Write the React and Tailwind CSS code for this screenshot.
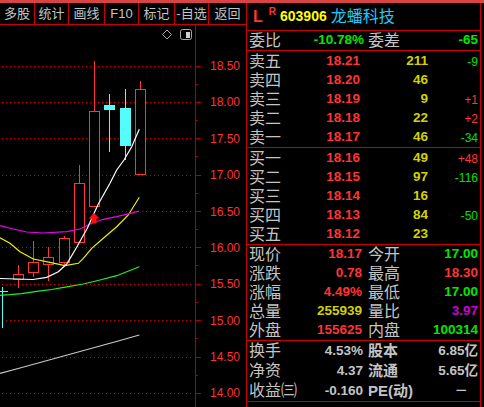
import React from "react";

const RED = "#ff3434";
const GREEN = "#00e800";
const YEL = "#d2d200";

const tools = [
  { t: "多股", w: "w-[35px]" },
  { t: "统计", w: "w-[34px]" },
  { t: "画线", w: "w-[36px]" },
  { t: "F10", w: "w-[34px]" },
  { t: "标记", w: "w-[36px]" },
  { t: "-自选", w: "w-[34px]" },
  { t: "返回", w: "flex-1", last: true },
];

// 盘口
const sells = [
  ["卖五", "18.21", "211", "-9"],
  ["卖四", "18.20", "46", ""],
  ["卖三", "18.19", "9", "+1"],
  ["卖二", "18.18", "22", "+2"],
  ["卖一", "18.17", "46", "-34"],
];
const buys = [
  ["买一", "18.16", "49", "+48"],
  ["买二", "18.15", "97", "-116"],
  ["买三", "18.14", "16", ""],
  ["买四", "18.13", "84", "-50"],
  ["买五", "18.12", "23", ""],
];

const stats = [
  ["现价", "18.17", RED, "今开", "17.00", GREEN],
  ["涨跌", "0.78", RED, "最高", "18.30", RED],
  ["涨幅", "4.49%", RED, "最低", "17.00", GREEN],
  ["总量", "255939", YEL, "量比", "3.97", "#d000d0"],
  ["外盘", "155625", RED, "内盘", "100314", GREEN],
];

const extra = [
  ["换手", "4.53%", "股本", "6.85亿"],
  ["净资", "4.37", "流通", "5.65亿"],
  ["收益㈢", "-0.160", "PE(动)", "－"],
];

// K线
const candles = [
  { x: 18.5, bt: 274.5, bb: 279.5, wt: 265, wb: 288, up: true },
  { x: 33.5, bt: 262.5, bb: 272.5, wt: 241, wb: 277, up: true },
  { x: 48.5, bt: 257.5, bb: 264.5, wt: 247, wb: 281, up: true },
  { x: 64.5, bt: 238.5, bb: 262.5, wt: 236, wb: 266, up: true },
  { x: 79.5, bt: 183.5, bb: 242.5, wt: 165, wb: 242, up: true },
  { x: 94.5, bt: 111.5, bb: 206.5, wt: 61, wb: 206, up: true },
  { x: 109.5, bt: 105, bb: 110, wt: 94, wb: 152, up: false },
  { x: 125.5, bt: 108, bb: 146, wt: 89, wb: 160, up: false },
  { x: 140.5, bt: 89.5, bb: 174.5, wt: 81, wb: 174, up: true },
];

const levels = ["18.50", "18.00", "17.50", "17.00", "16.50", "16.00", "15.50", "15.00", "14.50", "14.00"];
const yOf = (i) => 65.5 + i * 36.375;

const maWhite = "0,278.5 33,279.5 46.7,277.3 58.3,271.7 66.7,264 76.7,247.3 87.3,228.3 98.3,204 110,183.3 116.7,170 124,160 131.7,146.7 139.3,129.3";
const maPink = "0,225.7 13.3,229 26.7,232 43.3,233 66.7,231.7 80,229 91.7,223.3 103.3,219.3 116.7,216.7 130,213.3 139.3,211";
const maYellow = "0,237.7 10,243.3 20,251.7 33.3,259 50,262.3 65,265.7 78.3,263.3 83.3,258.3 91.7,248.3 103.3,238.3 116.7,226.7 128.3,215 139.3,197.3";
const maGreen = "0,295.3 10,294.7 21.7,293.7 36.7,291.3 51.7,289.5 66.7,286.8 83.3,284 100,280 116.7,275.7 139.3,266.7";
const maGray = "0,373.3 20,368 40,362.5 60,357 80,351.5 100,346 120,340.5 139.3,335";

const Chart = () => (
  <svg width="246" height="382" viewBox="0 25 246 382" shapeRendering="crispEdges" className="block">
    {/* 网格 */}
    {levels.map((l, i) => (
      <g key={l}>
        <line x1="2" x2="193" y1={Math.round(yOf(i)) + 0.5} y2={Math.round(yOf(i)) + 0.5} stroke="#d00000" strokeDasharray="1 3" />
        <line x1="195" x2="201" y1={Math.round(yOf(i)) + 0.5} y2={Math.round(yOf(i)) + 0.5} stroke="#b00000" />
        <line x1="195" x2="198" y1={Math.round(yOf(i) + 18) + 0.5} y2={Math.round(yOf(i) + 18) + 0.5} stroke="#b00000" />
        <text x="240" y={yOf(i) + 4.5} textAnchor="end" fill="#ff3030" fontSize="12" fontFamily="Liberation Sans, sans-serif">
          {l}
        </text>
      </g>
    ))}
    <line x1="195.5" x2="195.5" y1="25" y2="407" stroke="#b00000" />

    {/* 左侧残缺K线 */}
    <line x1="2.5" x2="2.5" y1="287" y2="328" stroke="#54fcfc" />
    <line x1="0" x2="8" y1="291.5" y2="291.5" stroke="#54fcfc" />

    {candles.map((c) =>
      c.up ? (
        <g key={c.x}>
          <line x1={c.x} x2={c.x} y1={c.wt} y2={c.bt} stroke={RED} />
          <line x1={c.x} x2={c.x} y1={c.bb} y2={c.wb} stroke={RED} />
          <rect x={c.x - 5} y={c.bt} width="10" height={c.bb - c.bt} fill="#000" stroke={RED} />
        </g>
      ) : (
        <g key={c.x}>
          <line x1={c.x} x2={c.x} y1={c.wt} y2={c.wb} stroke="#54fcfc" />
          <rect x={c.x - 5.5} y={c.bt} width="11" height={c.bb - c.bt} fill="#54fcfc" />
        </g>
      )
    )}

    {/* 均线 */}
    <g fill="none" shapeRendering="auto" strokeWidth="1.2">
      <polyline points={maGray} stroke="#c8c8c8" />
      <polyline points={maGreen} stroke="#20f020" />
      <polyline points={maYellow} stroke="#f0f000" />
      <polyline points={maPink} stroke="#f000f0" />
      <polyline points={maWhite} stroke="#ffffff" />
    </g>

    {/* 箭头 */}
    <polygon points="94,213 99.5,218.5 96.5,218.5 96.5,223.5 91.5,223.5 91.5,218.5 88.5,218.5" fill="#ff1010" shapeRendering="auto" />

    {/* 右上角图标 */}
    <polygon points="167,30 171.5,34.5 167,39 162.5,34.5" fill="none" stroke="#a8a8a8" shapeRendering="auto" />
    <rect x="180.5" y="29.5" width="11" height="10" rx="2" fill="none" stroke="#a8a8a8" shapeRendering="auto" />
    <rect x="185.5" y="31.5" width="4" height="6" fill="#d0d0d0" />
  </svg>
);

const OrderRow = ({ r }) => (
  <div className="h-[19px] flex items-center pl-[2px] pr-[2px]">
    <span className="w-[40px] text-[16px] leading-[19px] text-[#c4c4c4]">{r[0]}</span>
    <span className="w-[71px] text-right font-bold text-[13.5px] text-[#ff3434]">{r[1]}</span>
    <span className="w-[68px] text-right font-bold text-[13.5px] text-[#d2d200]">{r[2]}</span>
    <span className={"flex-1 text-right text-[12px] " + (r[3].startsWith("+") ? "text-[#ff3434]" : "text-[#00e000]")}>{r[3]}</span>
  </div>
);

export default function App() {
  return (
    <div className="w-[484px] h-[407px] bg-black overflow-hidden flex flex-col font-['Liberation_Sans','Noto_Sans_CJK_SC',sans-serif]">
      <div className="h-[3px] shrink-0 bg-[#d84444]" />
      <div className="flex flex-1 min-h-0">
        {/* 左侧: 工具栏 + K线 */}
        <div className="w-[246px] flex flex-col">
          <div className="h-[22px] flex border-b border-[#c80000] shrink-0">
            {tools.map((b) => (
              <div
                key={b.t}
                className={b.w + " flex items-center justify-center whitespace-nowrap text-[13px] leading-none text-[#c4c4c4] " + (b.last ? "" : "border-r border-[#c80000]")}
              >
                {b.t}
              </div>
            ))}
          </div>
          <Chart />
        </div>

        {/* 右侧: 盘口 */}
        <div className="w-[235px] border-x border-[#c80000] flex flex-col">
          <div className="h-[28px] shrink-0 border-b border-[#c80000] flex items-center pl-[6px]">
            <span className="text-[16px] font-bold text-[#ff3434]">L</span>
            <span className="ml-[6px] mb-[10px] text-[10px] font-bold text-[#ff3434]">R</span>
            <span className="ml-[4px] text-[14px] font-bold text-[#ffff00]">603906</span>
            <span className="ml-[4px] text-[16px] text-[#22c8f8]">龙蟠科技</span>
          </div>

          <div className="h-[20px] shrink-0 border-b border-[#c80000] flex items-center pl-[2px] pr-[2px]">
            <span className="w-[40px] text-[16px] text-[#c4c4c4]">委比</span>
            <span className="w-[75px] text-right font-bold text-[13.5px] text-[#00e800]">-10.78%</span>
            <span className="ml-[4px] w-[40px] text-[16px] text-[#c4c4c4]">委差</span>
            <span className="flex-1 text-right font-bold text-[13.5px] text-[#00e800]">-65</span>
          </div>

          <div className="h-[97px] shrink-0 border-b border-[#c80000] pt-[1px]">
            {sells.map((r) => (
              <OrderRow key={r[0]} r={r} />
            ))}
          </div>

          <div className="h-[97px] shrink-0 border-b border-[#c80000] pt-[1px]">
            {buys.map((r) => (
              <OrderRow key={r[0]} r={r} />
            ))}
          </div>

          <div className="h-[96px] shrink-0 border-b border-[#c80000]">
            {stats.map((s) => (
              <div key={s[0]} className="h-[19px] flex items-center pl-[2px] pr-[2px]">
                <span className="w-[40px] text-[16px] text-[#c4c4c4]">{s[0]}</span>
                <span className="w-[73px] text-right font-bold text-[13.5px]" style={{ color: s[2] }}>{s[1]}</span>
                <span className="ml-[6px] w-[40px] text-[16px] text-[#c4c4c4]">{s[3]}</span>
                <span className="flex-1 text-right font-bold text-[13.5px]" style={{ color: s[5] }}>{s[4]}</span>
              </div>
            ))}
          </div>

          <div className="h-[61px] shrink-0 border-b border-[#c80000]">
            {extra.map((e) => (
              <div key={e[0]} className="h-[20px] flex items-center pl-[2px] pr-[2px] text-[#c4c4c4]">
                <span className="w-[48px] text-[16px]">{e[0]}</span>
                <span className="w-[66px] text-right font-bold text-[13.5px]">{e[1]}</span>
                <span className="ml-[5px] w-[56px] text-[15px] font-bold">{e[2]}</span>
                <span className={"flex-1 text-right font-bold text-[13.5px] " + (e[3] === "－" ? "pr-[10px]" : "")}>{e[3]}</span>
              </div>
            ))}
          </div>

          <div className="h-[20px] shrink-0 flex items-start pt-[2px] pl-[2px] text-[16px] text-[#c4c4c4]">
            <span>今日均价</span>
            <span className="ml-[12px]">连续竞价</span>
          </div>
        </div>
        <div className="flex-1" />
      </div>
    </div>
  );
}
